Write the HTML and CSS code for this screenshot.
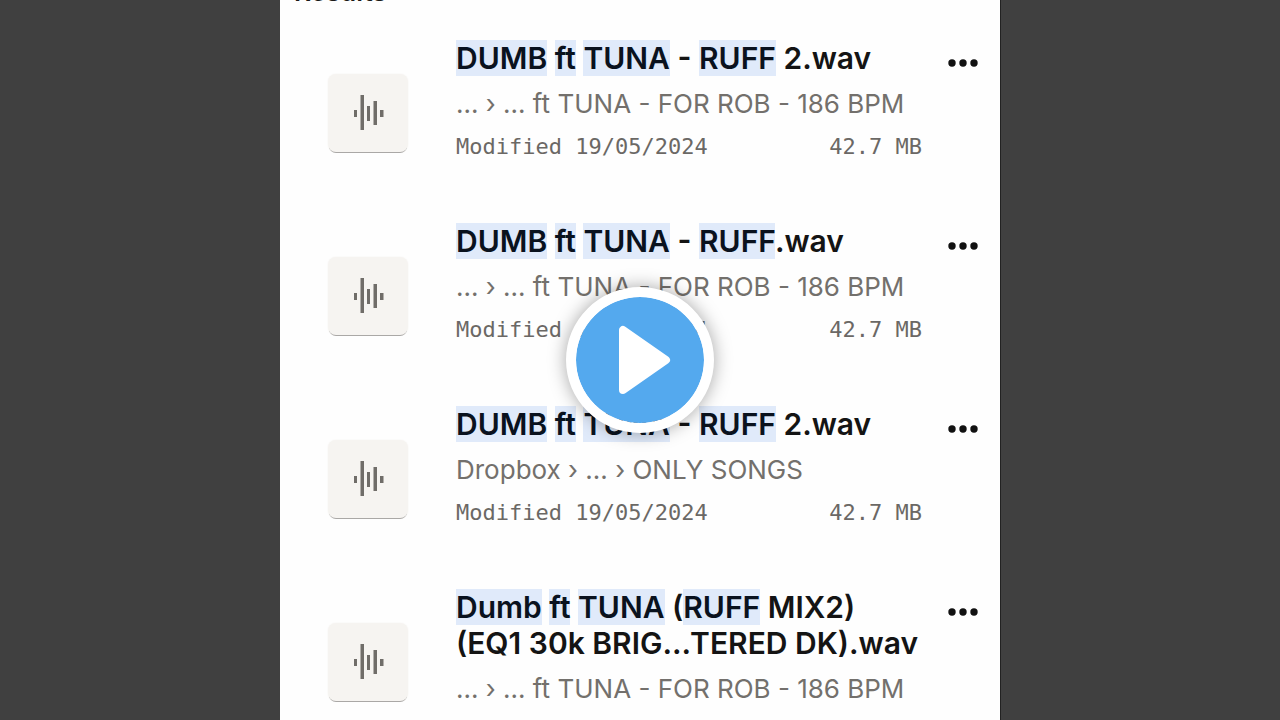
FILE: index.html
```html
<!DOCTYPE html>
<html lang="en">
<head>
    <meta charset="UTF-8">
    <meta name="viewport" content="width=device-width, initial-scale=1.0">
    <title>Search results</title>
    <link rel="stylesheet" href="styles.css">
</head>
<body>

<!-- shared icons -->
<svg class="icon-defs" aria-hidden="true">
    <symbol id="icon-audio" viewBox="0 0 30 36">
        <path d="M0 15h3v7H0zM6.500 0h3.500v35h-3.500zM13 11h3v15h-3zM19.500 6h3.500v24h-3.500zM26 15h3.500v7H26z"/>
    </symbol>
    <symbol id="icon-more" viewBox="0 0 30 8">
        <circle cx="4" cy="4" r="3.700"/>
        <circle cx="15" cy="4" r="3.700"/>
        <circle cx="26" cy="4" r="3.700"/>
    </symbol>
</svg>

<main class="screen">
    <h1 class="heading">Results</h1>
    <ul class="results">
        <li class="result">
            <div class="thumb"><svg class="audio-icon"><use href="#icon-audio"/></svg></div>
            <div class="info">
                <h2 class="title"><mark>DUMB</mark> <mark>ft</mark> <mark>TUNA</mark> - <mark>RUFF</mark> 2.wav</h2>
                <p class="path">... › ... ft TUNA - FOR ROB - 186 BPM</p>
                <p class="meta"><span>Modified 19/05/2024</span><span>42.7 MB</span></p>
            </div>
            <button type="button" class="more" aria-label="More options"><svg class="more-icon"><use href="#icon-more"/></svg></button>
        </li>
        <li class="result">
            <div class="thumb"><svg class="audio-icon"><use href="#icon-audio"/></svg></div>
            <div class="info">
                <h2 class="title"><mark>DUMB</mark> <mark>ft</mark> <mark>TUNA</mark> - <mark>RUFF</mark>.wav</h2>
                <p class="path">... › ... ft TUNA - FOR ROB - 186 BPM</p>
                <p class="meta"><span>Modified 19/05/2024</span><span>42.7 MB</span></p>
            </div>
            <button type="button" class="more" aria-label="More options"><svg class="more-icon"><use href="#icon-more"/></svg></button>
        </li>
        <li class="result">
            <div class="thumb"><svg class="audio-icon"><use href="#icon-audio"/></svg></div>
            <div class="info">
                <h2 class="title"><mark>DUMB</mark> <mark>ft</mark> <mark>TUNA</mark> - <mark>RUFF</mark> 2.wav</h2>
                <p class="path">Dropbox › ... › ONLY SONGS</p>
                <p class="meta"><span>Modified 19/05/2024</span><span>42.7 MB</span></p>
            </div>
            <button type="button" class="more" aria-label="More options"><svg class="more-icon"><use href="#icon-more"/></svg></button>
        </li>
        <li class="result">
            <div class="thumb"><svg class="audio-icon"><use href="#icon-audio"/></svg></div>
            <div class="info">
                <h2 class="title"><mark>Dumb</mark> <mark>ft</mark> <mark>TUNA</mark> (<mark>RUFF</mark> MIX2)<br>(EQ1 30k BRIG...TERED DK).wav</h2>
                <p class="path">... › ... ft TUNA - FOR ROB - 186 BPM</p>
            </div>
            <button type="button" class="more" aria-label="More options"><svg class="more-icon"><use href="#icon-more"/></svg></button>
        </li>
    </ul>
</main>

<button type="button" class="play" aria-label="Play">
    <svg class="play-icon" viewBox="0 0 52 70"><path d="M4 5v60L47 35z"/></svg>
</button>

</body>
</html>
```

FILE: styles.css
```css
* {
    box-sizing: border-box;
}
body {
    margin: 0;
    height: 100vh;
    overflow: hidden;
    position: relative;
    background-color: #404040;
    font-family: Inter, "Liberation Sans", sans-serif;
}
.icon-defs {
    display: none;
}
.screen {
    display: flow-root;
    width: 56.25%;
    min-height: 100%;
    margin: 0 auto;
    background: #fefefe;
    box-shadow: 1px 0 0 #222;
}
/* the list is scrolled, so the heading is mostly above the top edge */
.heading {
    margin: -24px 0 0;
    padding: 0 14px;
    font-size: 26px;
    line-height: 32px;
    font-weight: 600;
    color: #1a1918;
}
.results {
    list-style: none;
    margin: 32px 0 0;
    padding: 0 22px 0 48px;
}
.result {
    display: flex;
    align-items: flex-start;
    margin-bottom: 61px;
}
.result:last-child {
    margin-bottom: 0;
}
.thumb {
    display: flex;
    align-items: center;
    justify-content: center;
    flex: none;
    width: 80px;
    height: 78px;
    margin: 34px 48px 0 0;
    padding-left: 2px;
    background: #f6f4f1;
    border-radius: 8px;
    box-shadow: 0 2px 0 -1px #aaa8a6, 0 0 2px #f4f2ef;
}
.audio-icon {
    width: 30px;
    height: 36px;
    fill: #706d69;
}
.info {
    flex: 1;
    min-width: 0;
}
.title {
    margin: 0;
    font-size: 30px;
    line-height: 36px;
    font-weight: 600;
    color: #141414;
    white-space: nowrap;
}
mark {
    background: #e0eafa;
    color: #0a121e;
}
.path {
    margin: 10px 0 0;
    font-size: 26px;
    line-height: 36px;
    font-weight: 400;
    color: #73706c;
    white-space: nowrap;
}
.meta {
    display: flex;
    justify-content: space-between;
    margin: 10px 0 0;
    font-family: "DejaVu Sans Mono", monospace;
    font-size: 22px;
    line-height: 30px;
    color: #6b6865;
}
.more {
    flex: none;
    width: 30px;
    height: 36px;
    margin: 5px 0 0 26px;
    padding: 0;
    border: 0;
    background: none;
    cursor: pointer;
}
.more-icon {
    display: block;
    width: 30px;
    height: 8px;
    margin: auto;
    fill: #111;
}
.play {
    position: absolute;
    top: 50%;
    left: 50%;
    transform: translate(-50%, -50%);
    display: flex;
    align-items: center;
    justify-content: center;
    width: 148px;
    height: 146px;
    padding: 0 0 0 10px;
    border: 10px solid #fff;
    border-radius: 50%;
    background: #54a9ee;
    background-clip: padding-box;
    box-shadow: 0 0 18px rgba(0, 0, 0, 0.35);
    cursor: pointer;
}
.play-icon {
    width: 52px;
    height: 70px;
    fill: #fff;
    stroke: #fff;
    stroke-width: 8px;
    stroke-linejoin: round;
}
```
